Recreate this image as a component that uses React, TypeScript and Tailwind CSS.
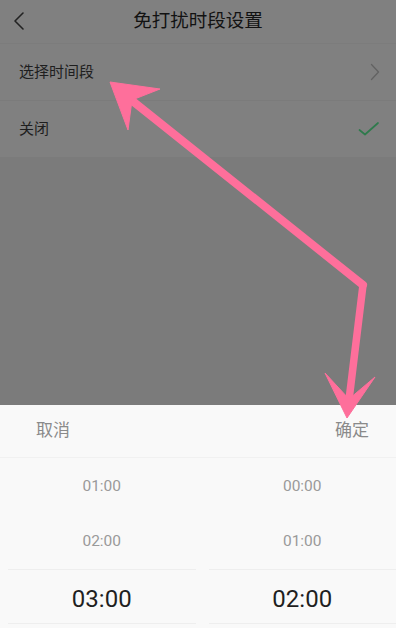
import React from "react";

export default function App() {
  const font = { fontFamily: '"Roboto", "Noto Sans CJK SC", sans-serif' };
  return (
    <div className="relative w-[396px] h-[628px] overflow-hidden bg-[#7b7b7b]" style={font}>
      <div className="flex flex-col h-full">
        {/* Header */}
        <div className="relative h-[44px] flex items-center justify-center bg-[#808080] border-b border-[#7c7c7c]">
          <svg className="absolute left-[12px] top-[11px]" width="14" height="20" viewBox="0 0 14 20" fill="none">
            <path d="M11 2 L3 10 L11 18" stroke="#222" strokeWidth="1.6" strokeLinecap="round" strokeLinejoin="round" />
          </svg>
          <span className="text-[18.5px] text-[#121212] leading-none">免打扰时段设置</span>
        </div>
        {/* Rows */}
        <div className="bg-[#808080]">
          <div className="h-[57px] flex items-center justify-between pl-[19px] pr-[16px] border-b border-[#7b7b7b]">
            <span className="text-[15px] text-[#1e1e1e]">选择时间段</span>
            <svg width="10" height="18" viewBox="0 0 10 18" fill="none">
              <path d="M1.5 1.5 L8.5 9 L1.5 16.5" stroke="#626262" strokeWidth="1.3" strokeLinecap="round" strokeLinejoin="round" />
            </svg>
          </div>
          <div className="h-[56px] flex items-center justify-between pl-[19px] pr-[16px]">
            <span className="text-[15px] text-[#1e1e1e]">关闭</span>
            <svg width="22" height="16" viewBox="0 0 22 16" fill="none">
              <path d="M1.5 9 L7 13.5 L20 2" stroke="#2f7a4c" strokeWidth="1.7" strokeLinecap="round" strokeLinejoin="round" />
            </svg>
          </div>
        </div>
        <div className="flex-1" />
        {/* Bottom sheet */}
        <div className="h-[223px] bg-[#f9f9f9] flex flex-col">
          <div className="h-[53px] flex items-center justify-between px-[36px] border-b border-[#f1f1f1] shrink-0">
            <span className="text-[17px] text-[#8a8a8a]">取消</span>
            <span className="text-[17px] text-[#8a8a8a] mr-[-9px]">确定</span>
          </div>
          <div className="flex-1 flex gap-[13px] pl-[8px]">
            <div className="flex-1 flex flex-col">
              <div className="h-[57px] flex items-center justify-center text-[15.5px] text-[#9a9a9a]">01:00</div>
              <div className="h-[54px] flex items-center justify-center text-[15.5px] text-[#9a9a9a]">02:00</div>
              <div className="h-[55px] flex items-center justify-center pt-[4px] text-[24px] text-[#1f1f1f] border-t border-b border-[#eeeeee]">03:00</div>
            </div>
            <div className="flex-1 flex flex-col">
              <div className="h-[57px] flex items-center justify-center text-[15.5px] text-[#9a9a9a]">00:00</div>
              <div className="h-[54px] flex items-center justify-center text-[15.5px] text-[#9a9a9a]">01:00</div>
              <div className="h-[55px] flex items-center justify-center pt-[4px] text-[24px] text-[#1f1f1f] border-t border-b border-[#eeeeee]">02:00</div>
            </div>
          </div>
        </div>
      </div>
      {/* Annotation arrows */}
      <svg className="absolute inset-0 pointer-events-none" width="396" height="628" viewBox="0 0 396 628">
        <g fill="#fe6f9b" stroke="#fe6f9b">
          <line x1="363" y1="285" x2="130" y2="99" strokeWidth="8" strokeLinecap="round" />
          <polygon points="110,82 160,89 132,100 128,130" strokeWidth="1" strokeLinejoin="round" />
          <line x1="363" y1="285" x2="349" y2="400" strokeWidth="7.5" strokeLinecap="round" />
          <polygon points="347,418 325,373 349,399 375,377" strokeWidth="1" strokeLinejoin="round" />
        </g>
      </svg>
    </div>
  );
}
